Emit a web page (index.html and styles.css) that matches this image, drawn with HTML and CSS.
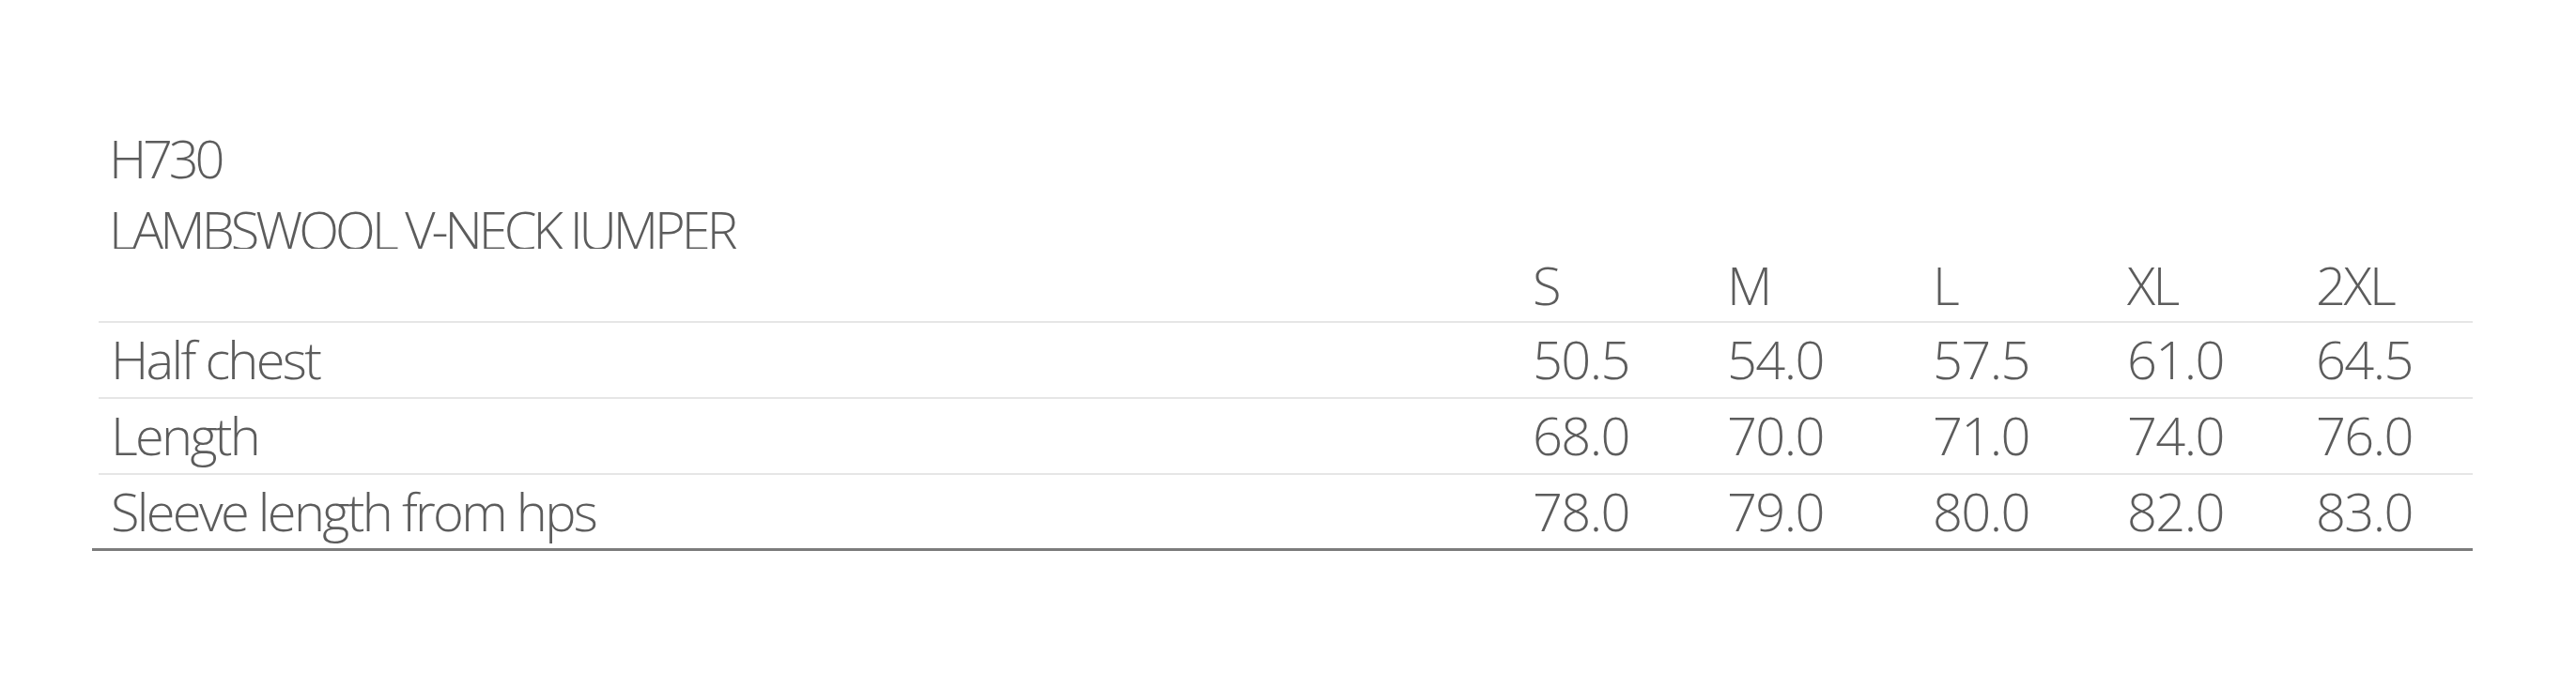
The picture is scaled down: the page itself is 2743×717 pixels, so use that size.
FILE: index.html
```html
<!DOCTYPE html>
<html lang="en">
<head>
<meta charset="utf-8">
<title>H730 Lambswool V-Neck Jumper – size chart</title>
<link rel="stylesheet" href="styles.css">
</head>
<body>
<div class="chart">
  <div class="caption">
    <div class="code">H730</div>
    <div class="name">LAMBSWOOL V-NECK JUMPER</div>
  </div>
  <div class="table">
    <div class="row head">
      <div class="label"></div>
      <div>S</div><div>M</div><div>L</div><div>XL</div><div>2XL</div>
    </div>
    <div class="row">
      <div class="label">Half chest</div>
      <div>50.5</div><div>54.0</div><div>57.5</div><div>61.0</div><div>64.5</div>
    </div>
    <div class="row">
      <div class="label">Length</div>
      <div>68.0</div><div>70.0</div><div>71.0</div><div>74.0</div><div>76.0</div>
    </div>
    <div class="row last">
      <div class="label">Sleeve length from hps</div>
      <div>78.0</div><div>79.0</div><div>80.0</div><div>82.0</div><div>83.0</div>
    </div>
  </div>
</div>
</body>
</html>
```
FILE: styles.css
```css
html, body {
  margin: 0;
  padding: 0;
  background: #ffffff;
}

body {
  font-family: "Open Sans", "Liberation Sans", sans-serif;
  font-weight: 300;
  font-size: 56px;
  line-height: 76px;
  color: #5c5c5c;
}

.chart {
  margin: 130px 0 0 98px;
  width: 2535px;
}

.caption {
  height: 135px;
  overflow: hidden;
  padding-left: 18px;
  letter-spacing: -4.2px;
}

.caption .name {
  letter-spacing: -4px;
}

.table {
  border-bottom: 3px solid #7c7c7c;
}

.row {
  margin-left: 7px;
  display: grid;
  grid-template-columns: 1fr 207px 219px 207px 201px 167px;
  padding-bottom: 3px;
  border-bottom: 2px solid #e6e6e6;
  white-space: nowrap;
  letter-spacing: -1.6px;
}

.row.head {
  padding-bottom: 1px;
  letter-spacing: -2.5px;
}

.row.last {
  border-bottom: 0;
  padding-bottom: 2px;
}

.label {
  padding-left: 13px;
  letter-spacing: -2.7px;
}
```
